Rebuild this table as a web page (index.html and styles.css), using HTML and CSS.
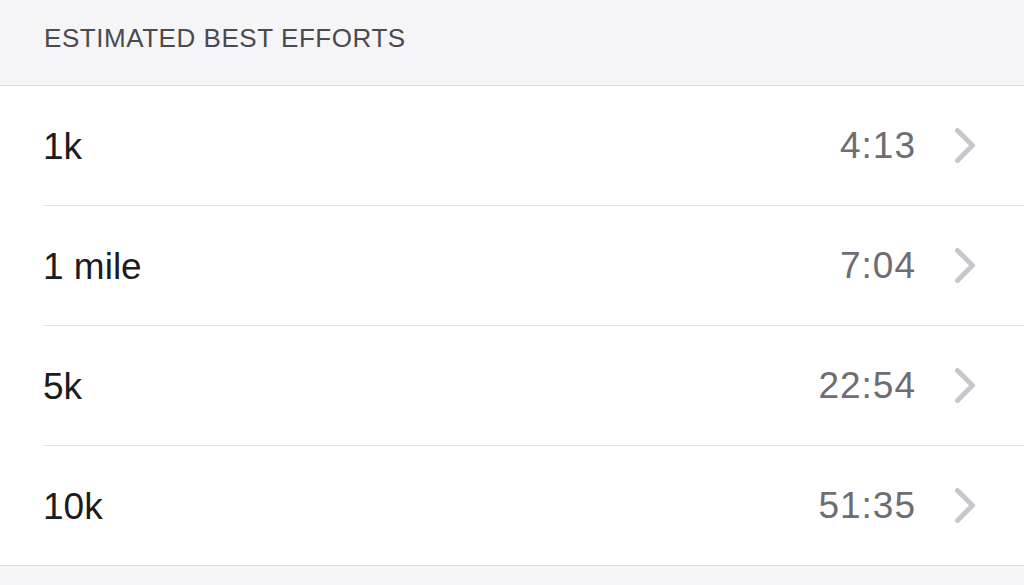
FILE: index.html
```html
<!DOCTYPE html>
<html>
<head>
<meta charset="utf-8">
<link rel="stylesheet" href="styles.css">
</head>
<body>
<div class="page">
  <div class="section-header">ESTIMATED BEST EFFORTS</div>
  <ul class="list">
    <li class="row">
      <span class="label">1k</span>
      <span class="value">4:13</span>
      <svg class="chev" viewBox="0 0 22 37" width="22" height="37"><polyline points="3.5,3.5 18.5,18.5 3.5,33.5" fill="none" stroke="#c7c7cc" stroke-width="5" stroke-linecap="round" stroke-linejoin="round"/></svg>
    </li>
    <li class="row">
      <span class="label">1 mile</span>
      <span class="value">7:04</span>
      <svg class="chev" viewBox="0 0 22 37" width="22" height="37"><polyline points="3.5,3.5 18.5,18.5 3.5,33.5" fill="none" stroke="#c7c7cc" stroke-width="5" stroke-linecap="round" stroke-linejoin="round"/></svg>
    </li>
    <li class="row">
      <span class="label">5k</span>
      <span class="value">22:54</span>
      <svg class="chev" viewBox="0 0 22 37" width="22" height="37"><polyline points="3.5,3.5 18.5,18.5 3.5,33.5" fill="none" stroke="#c7c7cc" stroke-width="5" stroke-linecap="round" stroke-linejoin="round"/></svg>
    </li>
    <li class="row">
      <span class="label">10k</span>
      <span class="value">51:35</span>
      <svg class="chev" viewBox="0 0 22 37" width="22" height="37"><polyline points="3.5,3.5 18.5,18.5 3.5,33.5" fill="none" stroke="#c7c7cc" stroke-width="5" stroke-linecap="round" stroke-linejoin="round"/></svg>
    </li>
  </ul>
  <div class="footer"></div>
</div>
</body>
</html>
```
FILE: styles.css
```css
html, body {
  margin: 0;
  padding: 0;
  background: #f5f5f7;
  font-family: "Liberation Sans", Arial, sans-serif;
}
.page {
  width: 1024px;
  height: 585px;
  overflow: hidden;
  background: #f5f5f7;
}
.section-header {
  height: 86px;
  box-sizing: border-box;
  padding: 23px 0 0 44px;
  font-size: 26px;
  line-height: 30px;
  color: #4a4a4f;
  letter-spacing: 0.55px;
  border-bottom: 1px solid #dcdce0;
}
.list {
  list-style: none;
  margin: 0;
  padding: 0 0 0 43px;
  background: #fff;
  border-bottom: 1px solid #dcdce0;
}
.row {
  height: 120px;
  box-sizing: border-box;
  display: flex;
  align-items: center;
  padding-right: 48px;
  border-bottom: 1px solid #e3e3e6;
}
.row:last-child {
  border-bottom: none;
  height: 119px;
}
.label {
  flex: 1;
  font-size: 37px;
  color: #1c1c1e;
  padding-top: 2px;
}
.value {
  font-size: 37px;
  color: #6d6d72;
  letter-spacing: 1px;
  margin-right: 38px;
}
.chev {
  display: block;
}
.footer {
  height: 20px;
}
```
